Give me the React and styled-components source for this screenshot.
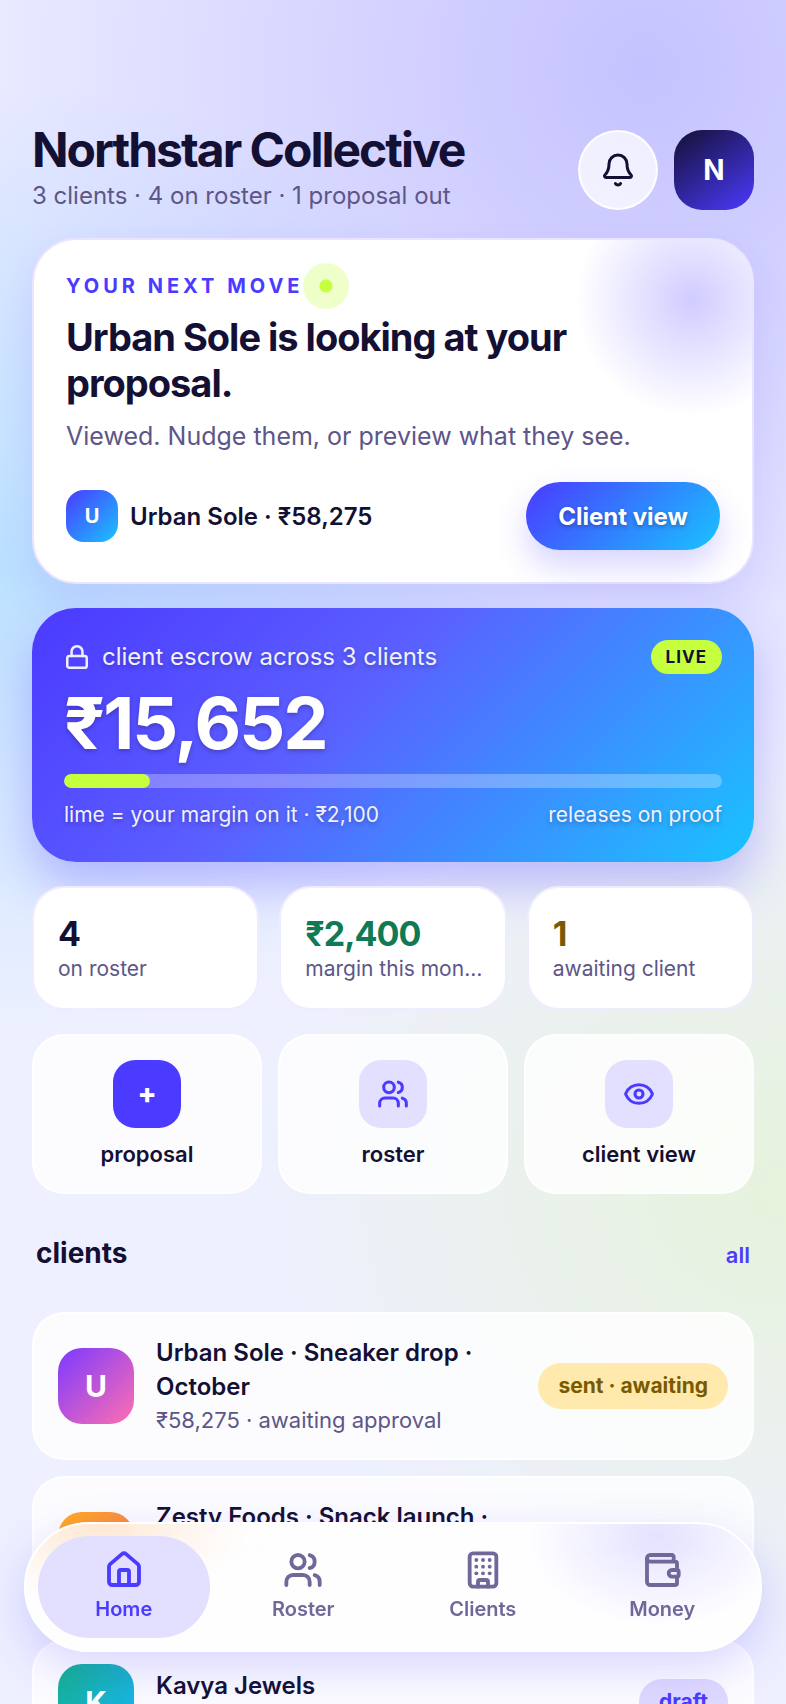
import styled, { createGlobalStyle } from "styled-components"
import { Bell, Building, Eye, House, Lock, Users, Wallet } from "lucide-react"

const GlobalStyle = createGlobalStyle`
  * {
    box-sizing: border-box;
  }

  body {
    margin: 0;
    font-family: "Inter", "Noto Sans", sans-serif;
    color: #141033;
    background: #eef0ff;
  }

  h1, h2, h3, p {
    margin: 0;
  }

  button {
    font-family: inherit;
    color: inherit;
    cursor: pointer;
  }
`;

const Page = styled.div`
  height: 100vh;
  overflow: hidden;
  padding: 124px 32px 0;
  background:
    radial-gradient(ellipse 95% 44% at 82% 4%, rgba(75, 58, 255, 0.25), rgba(75, 58, 255, 0)),
    radial-gradient(ellipse 75% 28% at 0% 33%, rgba(25, 175, 255, 0.24), rgba(25, 175, 255, 0)),
    radial-gradient(ellipse 70% 27% at 100% 70%, rgba(198, 255, 61, 0.18), rgba(198, 255, 61, 0)),
    #eef0ff;
`;

const Header = styled.header`
  display: flex;
  justify-content: space-between;
  padding-top: 6px;
  margin-bottom: 24px;
`;

const PageTitle = styled.h1`
  font-size: 48px;
  line-height: 40px;
  font-weight: 700;
  letter-spacing: -2px;
`;

const PageMeta = styled.p`
  margin-top: 8px;
  font-size: 24px;
  line-height: 36px;
  color: #5d5687;
`;

const HeaderActions = styled.div`
  display: flex;
  gap: 16px;
`;

const HeaderButton = styled.button`
  width: 80px;
  height: 80px;
  display: flex;
  justify-content: center;
  align-items: center;
  padding: 0;
  font-size: 28px;
  font-weight: 700;
  color: ${(props) => props.$dark ? "white" : "#141033"};
  background: ${(props) => props.$dark ? "linear-gradient(145deg, #141033, #4b3aff)" : "rgba(255, 255, 255, 0.72)"};
  border: ${(props) => props.$dark ? "0" : "2px solid rgba(255, 255, 255, 0.9)"};
  border-radius: ${(props) => props.$dark ? "28px" : "50%"};
`;

const MoveCard = styled.section`
  padding: 30px 32px 32px;
  border: 2px solid #e9e5ff;
  border-radius: 44px;
  background:
    radial-gradient(circle at calc(100% - 60px) 60px, rgba(75, 58, 255, 0.26), rgba(75, 58, 255, 0) 116px),
    white;
  box-shadow: 0 20px 40px rgba(75, 58, 255, 0.12);
`;

const Eyebrow = styled.div`
  display: flex;
  align-items: center;
  font-size: 20px;
  line-height: 32px;
  font-weight: 700;
  letter-spacing: 4px;
  color: #4b3aff;
`;

const LiveDot = styled.span`
  width: 46px;
  height: 46px;
  margin: -7px 0;
  border-radius: 50%;
  background: radial-gradient(circle, #c6ff3d 6px, rgba(198, 255, 61, 0.28) 7px);
`;

const MoveTitle = styled.h2`
  margin-top: 12px;
  font-size: 38px;
  line-height: 46px;
  font-weight: 700;
  letter-spacing: -1px;
`;

const MoveText = styled.p`
  margin-top: 12px;
  font-size: 25px;
  line-height: 36px;
  color: #5d5687;
`;

const MoveFooter = styled.div`
  display: flex;
  justify-content: space-between;
  align-items: center;
  margin-top: 28px;
`;

const ClientTag = styled.div`
  display: flex;
  align-items: center;
  gap: 12px;
  font-size: 24px;
  font-weight: 600;
`;

const Avatar = styled.span`
  flex: none;
  width: ${(props) => props.$small ? "52px" : "76px"};
  height: ${(props) => props.$small ? "52px" : "76px"};
  display: flex;
  justify-content: center;
  align-items: center;
  border-radius: ${(props) => props.$small ? "18px" : "24px"};
  font-size: ${(props) => props.$small ? "20px" : "30px"};
  font-weight: 700;
  color: white;
  background: linear-gradient(135deg, ${(props) => props.$from}, ${(props) => props.$to});
`;

const PrimaryButton = styled.button`
  height: 68px;
  padding: 0 32px;
  border: 0;
  border-radius: 34px;
  font-size: 24px;
  font-weight: 700;
  color: white;
  text-shadow: 0 2px 4px rgba(20, 16, 51, 0.35);
  background: linear-gradient(135deg, #4b3aff, #19c3ff);
  box-shadow: 0 16px 32px rgba(75, 58, 255, 0.22);
`;

const EscrowCard = styled.section`
  margin-top: 24px;
  padding: 32px 32px 30px;
  border-radius: 44px;
  color: white;
  text-shadow: 0 2px 4px rgba(20, 16, 51, 0.3);
  background: linear-gradient(135deg, #4b3aff 0%, #5b5fff 42%, #19c3ff 100%);
  box-shadow: 0 24px 48px rgba(75, 58, 255, 0.3);
`;

const EscrowRow = styled.div`
  display: flex;
  justify-content: space-between;
  align-items: center;
  font-size: ${(props) => props.$small ? "21px" : "24px"};
  line-height: 34px;
  color: #f1f0ff;
`;

const EscrowLabel = styled.span`
  display: flex;
  align-items: center;
  gap: 12px;
`;

const LiveBadge = styled.span`
  padding: 0 15px;
  border-radius: 17px;
  font-size: 17px;
  line-height: 34px;
  font-weight: 700;
  letter-spacing: 1px;
  text-shadow: none;
  color: #141033;
  background: #c6ff3d;
`;

const Amount = styled.p`
  margin: 14px 0 16px;
  font-size: 72px;
  line-height: 70px;
  font-weight: 700;
  letter-spacing: -2px;
`;

const Bar = styled.div`
  height: 14px;
  margin-bottom: 10px;
  border-radius: 7px;
  overflow: hidden;
  background: rgba(255, 255, 255, 0.28);
`;

const BarFill = styled.div`
  height: 100%;
  border-radius: 7px;
  background: #c6ff3d;
`;

const Stats = styled.section`
  display: grid;
  grid-template-columns: repeat(3, minmax(0, 1fr));
  gap: 20px;
  margin-top: 24px;
`;

const Stat = styled.div`
  height: 124px;
  padding: 26px 22px 26px 24px;
  border: 2px solid #efecff;
  border-radius: 32px;
  background: white;
`;

const StatValue = styled.p`
  font-size: 34px;
  line-height: 40px;
  font-weight: 700;
  letter-spacing: -1px;
  color: ${(props) => props.$color};
`;

const StatLabel = styled.p`
  font-size: 21px;
  line-height: 30px;
  color: #5d5687;
  overflow: hidden;
  white-space: nowrap;
  text-overflow: ellipsis;
`;

const Actions = styled.section`
  display: grid;
  grid-template-columns: repeat(3, minmax(0, 1fr));
  gap: 16px;
  margin-top: 24px;
`;

const glass = `
  background: rgba(255, 255, 255, 0.8);
  border: 2px solid rgba(255, 255, 255, 0.9);
  border-radius: 32px;
`;

const Action = styled.button`
  ${glass}
  display: flex;
  flex-direction: column;
  align-items: center;
  gap: 10px;
  padding: 24px 16px 22px;
  font-size: 22px;
  line-height: 32px;
  font-weight: 600;
`;

const ActionIcon = styled.span`
  flex: none;
  width: 68px;
  height: 68px;
  display: flex;
  justify-content: center;
  align-items: center;
  border-radius: 22px;
  font-size: 28px;
  font-weight: 800;
  color: ${(props) => props.$filled ? "white" : "#4b3aff"};
  background: ${(props) => props.$filled ? "#4b3aff" : "#e3dfff"};
`;

const SectionHead = styled.div`
  display: flex;
  justify-content: space-between;
  align-items: baseline;
  margin: 40px 4px 38px;
  line-height: 38px;

  h2 {
    font-size: 28px;
    font-weight: 700;
  }

  a {
    font-size: 22px;
    font-weight: 600;
    color: #4b3aff;
    text-decoration: none;
  }
`;

const ClientList = styled.div`
  display: flex;
  flex-direction: column;
  gap: 16px;
`;

const ClientRow = styled.article`
  ${glass}
  display: flex;
  align-items: center;
  gap: 22px;
  padding: 22px 24px;
`;

const ClientInfo = styled.div`
  flex: 1;

  h3 {
    font-size: 24px;
    line-height: 34px;
    font-weight: 600;
  }

  p {
    font-size: 22px;
    line-height: 32px;
    color: #5d5687;
  }
`;

const Status = styled.span`
  flex: none;
  padding: 0 20px;
  border-radius: 23px;
  font-size: 21px;
  line-height: 46px;
  font-weight: 700;
  color: ${(props) => props.$draft ? "#4b3aff" : "#7a5a00"};
  background: ${(props) => props.$draft ? "#dedaff" : "#ffe9ad"};
`;

const TabBar = styled.nav`
  position: fixed;
  left: 24px;
  right: 24px;
  bottom: 52px;
  display: grid;
  grid-template-columns: repeat(4, 1fr);
  gap: 8px;
  padding: 12px;
  border: 2px solid white;
  border-radius: 65px;
  background:
    radial-gradient(ellipse 150px 80px at 10% 0%, rgba(255, 150, 50, 0.2), rgba(255, 150, 50, 0)),
    radial-gradient(ellipse 130px 90px at 86% 10%, rgba(75, 58, 255, 0.14), rgba(75, 58, 255, 0)),
    rgba(254, 254, 255, 0.98);
  backdrop-filter: blur(32px);
  box-shadow: 0 16px 48px rgba(75, 58, 255, 0.2);
`;

const Tab = styled.a`
  height: 102px;
  display: flex;
  flex-direction: column;
  justify-content: center;
  align-items: center;
  gap: 4px;
  border-radius: 51px;
  font-size: 20px;
  line-height: 30px;
  font-weight: 600;
  text-decoration: none;
  color: ${(props) => props.$active ? "#4b3aff" : "#6f6899"};
  background: ${(props) => props.$active ? "#e3dfff" : "transparent"};
`;

const stats = [
  { value: "4", label: "on roster", color: "#141033" },
  { value: "₹2,400", label: "margin this month", color: "#0f7a55" },
  { value: "1", label: "awaiting client", color: "#7a5a00" },
];

const clients = [
  { name: "Urban Sole · Sneaker drop · October", detail: "₹58,275 · awaiting approval", status: "sent · awaiting", from: "#7b3aff", to: "#ff6fb1" },
  { name: "Zesty Foods · Snack launch · November", detail: "₹42,000 · in progress", status: "in production", from: "#ffae1f", to: "#ff6a55" },
  { name: "Kavya Jewels", detail: "₹18,000 · not sent", status: "draft", from: "#14b087", to: "#19b8ff" },
];

const tabs = [
  { label: "Home", Icon: House },
  { label: "Roster", Icon: Users },
  { label: "Clients", Icon: Building },
  { label: "Money", Icon: Wallet },
];

const App = () => {
  const marginShare = 13;

  return (
    <Page>
      <GlobalStyle />
      <Header>
        <div>
          <PageTitle>Northstar Collective</PageTitle>
          <PageMeta>3 clients · 4 on roster · 1 proposal out</PageMeta>
        </div>
        <HeaderActions>
          <HeaderButton aria-label="Notifications"><Bell size={36} /></HeaderButton>
          <HeaderButton $dark aria-label="Account">N</HeaderButton>
        </HeaderActions>
      </Header>

      <MoveCard>
        <Eyebrow>YOUR NEXT MOVE<LiveDot /></Eyebrow>
        <MoveTitle>Urban Sole is looking at your proposal.</MoveTitle>
        <MoveText>Viewed. Nudge them, or preview what they see.</MoveText>
        <MoveFooter>
          <ClientTag>
            <Avatar $small $from="#4b3aff" $to="#19c3ff">U</Avatar>
            Urban Sole · ₹58,275
          </ClientTag>
          <PrimaryButton>Client view</PrimaryButton>
        </MoveFooter>
      </MoveCard>

      <EscrowCard>
        <EscrowRow>
          <EscrowLabel><Lock size={26} strokeWidth={2.3} />client escrow across 3 clients</EscrowLabel>
          <LiveBadge>LIVE</LiveBadge>
        </EscrowRow>
        <Amount>₹15,652</Amount>
        <Bar><BarFill style={{ width: `${marginShare}%` }} /></Bar>
        <EscrowRow $small>
          <span>lime = your margin on it · ₹2,100</span>
          <span>releases on proof</span>
        </EscrowRow>
      </EscrowCard>

      <Stats>
        {stats.map((stat) => (
          <Stat key={stat.label}>
            <StatValue $color={stat.color}>{stat.value}</StatValue>
            <StatLabel>{stat.label}</StatLabel>
          </Stat>
        ))}
      </Stats>

      <Actions>
        <Action><ActionIcon $filled>+</ActionIcon>proposal</Action>
        <Action><ActionIcon><Users size={32} strokeWidth={2.3} /></ActionIcon>roster</Action>
        <Action><ActionIcon><Eye size={32} strokeWidth={2.3} /></ActionIcon>client view</Action>
      </Actions>

      <SectionHead>
        <h2>clients</h2>
        <a href="#clients">all</a>
      </SectionHead>

      <ClientList id="clients">
        {clients.map((client) => (
          <ClientRow key={client.name}>
            <Avatar $from={client.from} $to={client.to}>{client.name[0]}</Avatar>
            <ClientInfo>
              <h3>{client.name}</h3>
              <p>{client.detail}</p>
            </ClientInfo>
            <Status $draft={client.status !== "sent · awaiting"}>{client.status}</Status>
          </ClientRow>
        ))}
      </ClientList>

      <TabBar>
        {tabs.map(({ label, Icon }, i) => (
          <Tab href={`#${label.toLowerCase()}`} $active={i === 0} key={label}>
            <Icon size={40} strokeWidth={2.3} />
            {label}
          </Tab>
        ))}
      </TabBar>
    </Page>
  );
};

export default App
